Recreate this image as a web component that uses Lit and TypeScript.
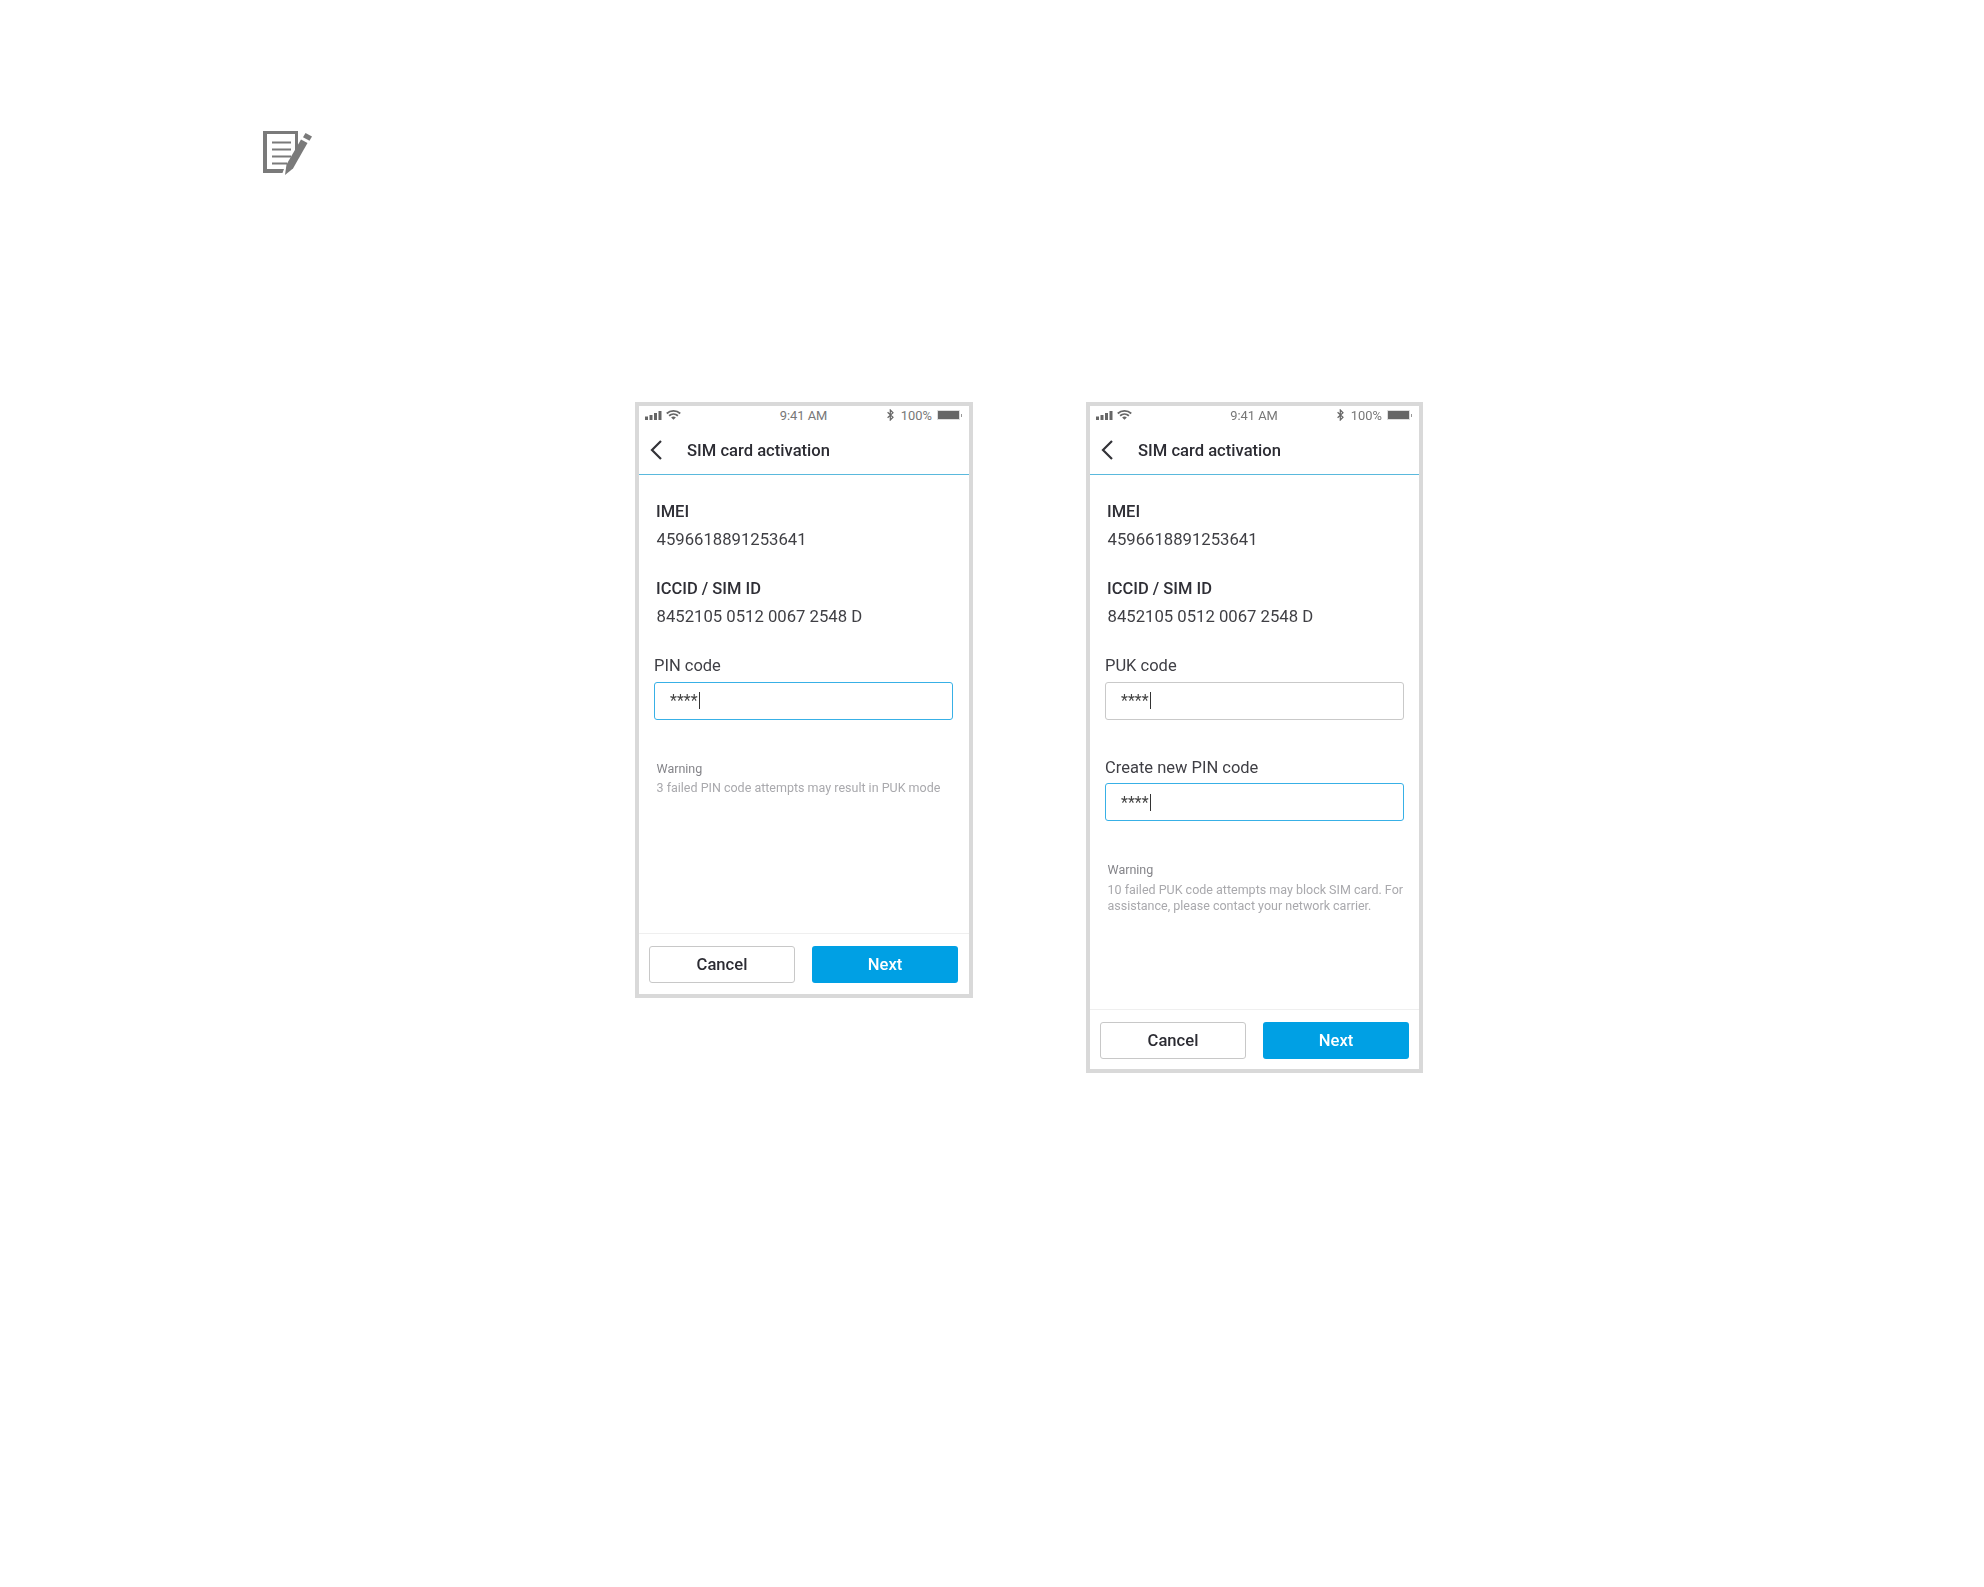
import { LitElement, html, css, svg } from "lit";
import { customElement } from "lit/decorators.js";

interface Field { label: string; focused: boolean; }
interface Screen { tall: boolean; fields: Field[]; warning: string[]; }

const SCREENS: Screen[] = [
  {
    tall: false,
    fields: [{ label: "PIN code", focused: true }],
    warning: ["3 failed PIN code attempts may result in PUK mode"],
  },
  {
    tall: true,
    fields: [
      { label: "PUK code", focused: false },
      { label: "Create new PIN code", focused: true },
    ],
    warning: ["10 failed PUK code attempts may block SIM card. For", "assistance, please contact your network carrier."],
  },
];

const noteIcon = svg`<svg class="note" width="50" height="46" viewBox="0 0 50 46" fill="#7a7a7a">
  <path d="M0 1H35V17L32 22V4H4V39H21L19.5 43H0Z"/>
  <path d="M9 11.5H28V13.5H9ZM9 18.5H28V20.5H9ZM9 25.5H28V27.5H9ZM9 32.5H24V34.5H9Z"/>
  <path d="M22 45L23.5 34.5L38 9.5L44.5 13L30 38.5Z"/>
  <path d="M42.5 3L49 6.5L46.5 10.7L40 7.2Z"/>
</svg>`;

const signal = svg`<svg width="18" height="9" viewBox="0 0 18 9" fill="#666">
  <rect x="0" y="5.5" width="3" height="3.5"/><rect x="4.5" y="4" width="3" height="5"/>
  <rect x="9" y="2" width="3" height="7"/><rect x="13.5" y="0" width="3" height="9"/>
</svg>`;
const wifi = svg`<svg width="15" height="10" viewBox="0 0 16 10" fill="none" stroke="#666" stroke-width="1.9">
  <path d="M.8 3.4C4.8-.2 11.2-.2 15.2 3.4"/>
  <path d="M3.3 5.8C6 3.4 10 3.4 12.7 5.8"/><path d="M8 10L5.5 7.6C7 6.4 9 6.4 10.5 7.6Z" fill="#666" stroke="none"/>
</svg>`;
const bluetooth = svg`<svg width="7" height="12" viewBox="0 0 7 12" fill="none" stroke="#666" stroke-width="1.2">
  <path d="M.6 3.2L6 8.2L3.3 11V1L6 3.8L.6 8.8"/>
</svg>`;
const chevron = svg`<svg width="12" height="20" viewBox="0 0 12 20" fill="none" stroke="#333338" stroke-width="2.2">
  <path d="M11 1L2 10L11 19"/>
</svg>`;

@customElement("app-root")
export class AppRoot extends LitElement {
  static styles = css`
    :host { display: block; background: #fff; min-height: 1587px; font-family: Roboto, "Liberation Sans", sans-serif; }
    .page { padding: 130px 0 0 263px; }
    .note { display: block; filter: blur(0.5px); }
    .row { display: flex; align-items: flex-start; gap: 113px; margin: 226px 0 0 372px; filter: blur(0.4px); }
    .phone { width: 338px; box-sizing: border-box; border: 4px solid #d9d9d9; display: flex; flex-direction: column; height: 596px; background: #fff; }
    .phone.tall { width: 337px; height: 671px; }
    .status { height: 20px; box-sizing: border-box; display: grid; grid-template-columns: 1fr auto 1fr; align-items: center; padding: 0 7px 2px 6px; color: #777; font-size: 12.9px; }
    .left { display: flex; align-items: center; gap: 3px; }
    .right { display: flex; align-items: center; justify-content: flex-end; gap: 6px; }
    .bt { display: flex; margin-right: 1px; }
    .battery { display: flex; align-items: center; gap: 1px; margin-left: -1px; }
    .cell { width: 23px; height: 10px; background: #666; border: 1px solid #ddd; box-sizing: border-box; border-radius: 1px; }
    .nub { width: 1px; height: 3px; background: #999; }
    .head { height: 49px; box-sizing: border-box; display: flex; align-items: center; gap: 25px; padding: 0 0 0 11px; border-bottom: 1.5px solid #5ab9dd; }
    .head span { font-size: 16.6px; font-weight: 500; color: #2c2c33; }
    .body { flex: 1; padding: 27px 15px 0 15px; display: flex; flex-direction: column; }
    .k { margin-left: 2px; line-height: 20px; font-size: 16.5px; font-weight: 500; color: #2f2f36; }
    .v { margin: 8px 0 29px 2.5px; line-height: 20px; font-size: 16.7px; color: #3f3f44; }
    .field { width: 299px; }
    .field + .field { margin-top: 38px; }
    .label { display: block; line-height: 20px; font-size: 16.5px; color: #3f3f45; }
    .input { margin-top: 5.5px; height: 38px; box-sizing: border-box; border: 1.5px solid #c9c9c9; border-radius: 3px; padding: 0 0 0 15px; display: flex; align-items: center; font-size: 16px; color: #444; }
    .input.on { border-color: #38b0e6; }
    .caret { width: 1px; height: 17px; background: #333; margin-left: 1.5px; }
    .warn { margin: 41px 0 0 2.5px; font-size: 12.5px; line-height: 16.5px; color: #a9a9ad; }
    .warn b { display: block; font-weight: 400; color: #85858a; margin-bottom: 3px; }
    .warn div { white-space: nowrap; }
    .foot { flex: 0 0 60px; box-sizing: border-box; border-top: 1px solid #efefef; display: flex; gap: 17px; padding: 12px 0 0 10px; }
    .phone:not(.tall) .foot { flex-basis: 61px; }
    .btn { width: 146px; height: 37px; box-sizing: border-box; border-radius: 3px; display: flex; align-items: center; justify-content: center; font-size: 16.6px; font-weight: 500; }
    .cancel { border: 1.5px solid #c8c8c8; color: #2c2c33; background: #fff; }
    .next { background: #00a0e4; color: #fff; }
  `;

  private screen(s: Screen) {
    return html`<div class="phone ${s.tall ? "tall" : ""}">
      <div class="status">
        <div class="left">${signal}${wifi}</div>
        <span>9:41 AM</span>
        <div class="right"><span class="bt">${bluetooth}</span><span>100%</span>
          <div class="battery"><div class="cell"></div><div class="nub"></div></div>
        </div>
      </div>
      <div class="head">${chevron}<span>SIM card activation</span></div>
      <div class="body">
        <div class="k">IMEI</div>
        <div class="v">4596618891253641</div>
        <div class="k">ICCID / SIM ID</div>
        <div class="v">8452105 0512 0067 2548 D</div>
        ${s.fields.map(f => html`<div class="field">
          <span class="label">${f.label}</span>
          <div class="input ${f.focused ? "on" : ""}">****<i class="caret"></i></div>
        </div>`)}
        <div class="warn"><b>Warning</b>${s.warning.map(l => html`<div>${l}</div>`)}</div>
      </div>
      <div class="foot">
        <div class="btn cancel">Cancel</div>
        <div class="btn next">Next</div>
      </div>
    </div>`;
  }

  render() {
    return html`<div class="page">
      ${noteIcon}
      <div class="row">${SCREENS.map(s => this.screen(s))}</div>
    </div>`;
  }
}
